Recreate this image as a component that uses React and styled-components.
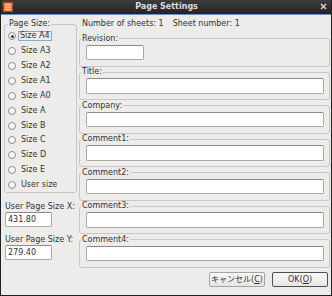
import React from "react";
import styled, { createGlobalStyle } from "styled-components";

const Global = createGlobalStyle`
  html, body { margin: 0; padding: 0; background: #edeceb; }
  body { font-family: "DejaVu Sans", "Noto Sans CJK JP", sans-serif; font-size: 8px; color: #2e3436; }
  * { box-sizing: border-box; }
`;

const Window = styled.div`
  width: 332px;
  height: 296px;
  display: flex;
  flex-direction: column;
  background: #edeceb;
  border: 1px solid #1f1f1f;
  border-top: none;
  overflow: hidden;
`;

const TitleBar = styled.div`
  height: 15px;
  flex: none;
  display: flex;
  align-items: center;
  justify-content: space-between;
  padding: 0 5px 1px 3px;
  background: linear-gradient(#3d3d3d, #242424);
  border-bottom: 1px solid #6f8fbf;
  margin: 0 -1px;
`;

const Title = styled.div`
  flex: 1;
  text-align: center;
  font-weight: bold;
  font-size: 8px;
  color: #dcdcdc;
  line-height: 10px;
`;

const Content = styled.div`
  display: flex;
  gap: 2px;
  padding: 4px 1px 0 3px;
`;

const LeftCol = styled.div`
  width: 73px;
  flex: none;
  display: flex;
  flex-direction: column;
`;

const RightCol = styled.div`
  flex: 1;
  display: flex;
  flex-direction: column;
  gap: 0.5px;
`;

const Group = styled.fieldset`
  margin: 0;
  min-width: 0;
  border: 1px solid #c9c7c4;
  border-radius: 3px;
  padding: ${(p) => p.$pad || "1px 5px 5.5px 6px"};
`;

const Legend = styled.legend`
  padding: 0 1px;
  margin-left: ${(p) => p.$ml || "-5px"};
  line-height: 10px;
  font-size: 8px;
  color: #2e3436;
`;

const Info = styled.div`
  display: flex;
  gap: 9px;
  line-height: 10px;
  padding-left: 3px;
  margin-bottom: 4px;
`;

const Field = styled.input`
  display: block;
  width: ${(p) => p.$w || "100%"};
  height: ${(p) => p.$h || "15.5px"};
  margin: 0;
  padding: 0 2px;
  border: 1px solid #a9a9a9;
  border-top-color: #8a8a8a;
  border-radius: 2px;
  background: #fff;
  font-family: inherit;
  font-size: 8px;
  color: #2e3436;
  outline: none;
`;

const RadioRow = styled.div`
  display: flex;
  align-items: center;
  height: 14.87px;
  padding-left: 3px;
  gap: 4px;
`;

const Circle = styled.span`
  width: 8px;
  height: 8px;
  flex: none;
  border-radius: 50%;
  border: 1px solid #8e8e8e;
  background: linear-gradient(#ffffff, #f0f0f0);
  display: flex;
  align-items: center;
  justify-content: center;
  &::after {
    content: "";
    width: 3px;
    height: 3px;
    border-radius: 50%;
    background: ${(p) => (p.$checked ? "#2e3436" : "transparent")};
  }
`;

const RadioLabel = styled.span`
  line-height: 8px;
  padding: 0 1px;
  margin-left: ${(p) => (p.$focused ? "-2px" : "0")};
  border: ${(p) => (p.$focused ? "1px solid #93a6c0" : "none")};
  height: ${(p) => (p.$focused ? "10px" : "auto")};
  display: inline-flex;
  align-items: center;
`;

const SizeLabel = styled.div`
  line-height: 10px;
  padding-left: 1px;
  margin-top: ${(p) => p.$mt || "9px"};
`;

const SizeInput = styled(Field)`
  margin-left: 1px;
`;

const Footer = styled.div`
  display: flex;
  justify-content: flex-end;
  gap: 7px;
  padding-right: 3px;
  margin-top: 4.5px;
`;

const Button = styled.button`
  height: 15px;
  width: ${(p) => p.$w};
  padding: 0;
  border: 1px solid ${(p) => (p.$default ? "#4e4e4e" : "#a3a3a3")};
  border-radius: 2px;
  background: linear-gradient(#f8f8f7, #e6e5e3);
  font-family: inherit;
  font-size: 8px;
  color: #2e3436;
  line-height: 12px;
  u { text-decoration: underline; }
`;

const sizes = ["Size A4", "Size A3", "Size A2", "Size A1", "Size A0", "Size A", "Size B", "Size C", "Size D", "Size E", "User size"];
const fields = ["Title:", "Company:", "Comment1:", "Comment2:", "Comment3:", "Comment4:"];

function AppIcon() {
  return (
    <svg width="10" height="10" viewBox="0 0 10 10">
      <rect x="0.5" y="0.5" width="9" height="9" fill="#e9723a" stroke="#c24f1c" />
      <rect x="2" y="2" width="6" height="1.2" fill="#fbd3ac" />
      <rect x="2" y="4.4" width="6" height="1.2" fill="#fbd3ac" />
      <rect x="2" y="6.8" width="6" height="1.2" fill="#fbd3ac" />
    </svg>
  );
}

function CloseIcon() {
  return (
    <svg width="7" height="7" viewBox="0 0 7 7">
      <path d="M1 1 L6 6 M6 1 L1 6" stroke="#d0d0d0" strokeWidth="1.6" />
    </svg>
  );
}

export default function App() {
  return (
    <>
      <Global />
      <Window>
        <TitleBar>
          <AppIcon />
          <Title>Page Settings</Title>
          <CloseIcon />
        </TitleBar>
        <Content>
          <LeftCol>
            <Group $pad="0 0 0 0">
              <Legend $ml="3px">Page Size:</Legend>
              {sizes.map((s, i) => (
                <RadioRow key={s}>
                  <Circle $checked={i === 0} />
                  <RadioLabel $focused={i === 0}>{s}</RadioLabel>
                </RadioRow>
              ))}
            </Group>
            <SizeLabel>User Page Size X:</SizeLabel>
            <SizeInput $w="47px" $h="15px" defaultValue="431.80" />
            <SizeLabel $mt="8px">User Page Size Y:</SizeLabel>
            <SizeInput $w="47px" $h="15px" defaultValue="279.40" />
          </LeftCol>
          <RightCol>
            <Info>
              <span>Number of sheets: 1</span>
              <span>Sheet number: 1</span>
            </Info>
            <Group>
              <Legend>Revision:</Legend>
              <Field $w="58px" />
            </Group>
            {fields.map((f) => (
              <Group key={f}>
                <Legend>{f}</Legend>
                <Field />
              </Group>
            ))}
          </RightCol>
        </Content>
        <Footer>
          <Button $w="56px">キャンセル(<u>C</u>)</Button>
          <Button $w="56px" $default>OK(<u>O</u>)</Button>
        </Footer>
      </Window>
    </>
  );
}
